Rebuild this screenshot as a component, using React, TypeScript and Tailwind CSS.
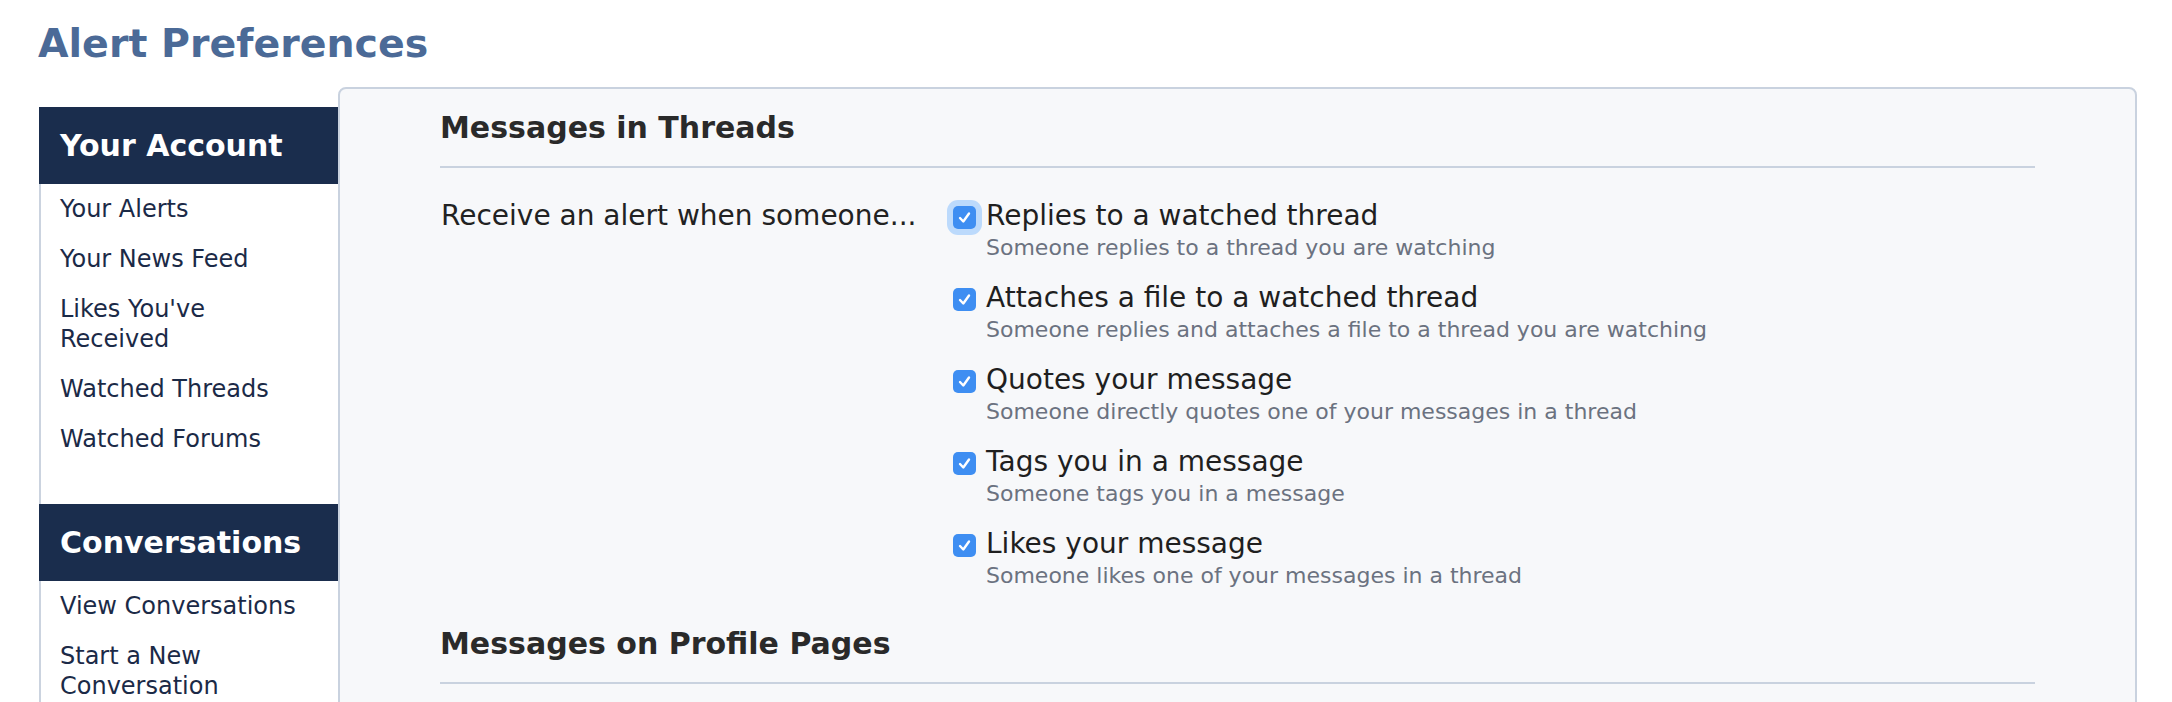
const sidebar = [
  {
    title: 'Your Account',
    links: ['Your Alerts', 'Your News Feed', "Likes You've Received", 'Watched Threads', 'Watched Forums'],
  },
  {
    title: 'Conversations',
    links: ['View Conversations', 'Start a New Conversation'],
  },
]

const threadAlerts = [
  { label: 'Replies to a watched thread', hint: 'Someone replies to a thread you are watching', focused: true },
  { label: 'Attaches a file to a watched thread', hint: 'Someone replies and attaches a file to a thread you are watching' },
  { label: 'Quotes your message', hint: 'Someone directly quotes one of your messages in a thread' },
  { label: 'Tags you in a message', hint: 'Someone tags you in a message' },
  { label: 'Likes your message', hint: 'Someone likes one of your messages in a thread' },
]

const CheckBox = ({ focused }: { focused?: boolean }) => (
  <span
    className={`mt-[7px] flex h-[23px] w-[23px] shrink-0 items-center justify-center rounded-[5px] bg-[#3e8ef2] ${
      focused ? 'shadow-[0_0_0_6px_#bcdafc]' : ''
    }`}
  >
    <svg width="15" height="15" viewBox="0 0 15 15" fill="none">
      <path d="M3 8 L6.3 11.5 L12 3.5" stroke="white" strokeWidth="2.4" strokeLinecap="round" strokeLinejoin="round" />
    </svg>
  </span>
)

export default function App() {
  return (
    <div className="min-h-screen bg-white font-['DejaVu_Sans',sans-serif]">
      {/* ページタイトル */}
      <h1 className="pl-[38px] pt-[19px] text-[39.5px] font-bold leading-[48px] text-[#4b6a97]">Alert Preferences</h1>

      <div className="mt-[20px] flex items-start pl-[39px] pr-[35px]">
        {/* サイドバー */}
        <nav className="mt-[20px] w-[299px] shrink-0 border-l-2 border-[#cbd3df] bg-white">
          {sidebar.map((section, i) => (
            <div key={section.title} className={i > 0 ? 'mt-[40px]' : ''}>
              <h3 className="-ml-[2px] bg-[#1a2d4d] pb-[20px] pl-[21px] pt-[21px] text-[30px] font-bold leading-[36px] text-white">
                {section.title}
              </h3>
              <ul>
                {section.links.map((link) => (
                  <li key={link} className="py-[10px] pl-[19px] pr-[32px] text-[24px] leading-[30px] text-[#1b2a47]">
                    {link}
                  </li>
                ))}
              </ul>
            </div>
          ))}
        </nav>

        {/* 設定パネル */}
        <main className="min-h-[640px] flex-1 rounded-[8px] border-2 border-[#c9d2df] bg-[#f7f8fa] px-[100px] pt-[21px]">
          <h2 className="border-b-2 border-[#c9d2df] pb-[20px] text-[30px] font-bold leading-[36px] text-[#2a2a2a]">
            Messages in Threads
          </h2>

          <div className="flex pt-[31px]">
            <div className="w-[513px] shrink-0 pl-[1px] text-[28px] leading-[34px] text-[#222]">
              Receive an alert when someone...
            </div>
            <ul className="flex flex-col gap-[19px]">
              {threadAlerts.map((item) => (
                <li key={item.label} className="flex gap-[10px]">
                  <CheckBox focused={item.focused} />
                  <div>
                    <div className="text-[28px] leading-[34px] text-[#1f1f1f]">{item.label}</div>
                    <div className="mt-[1px] text-[22px] leading-[28px] text-[#6b7280]">{item.hint}</div>
                  </div>
                </li>
              ))}
            </ul>
          </div>

          <h2 className="mt-[36px] border-b-2 border-[#c9d2df] pb-[20px] text-[30px] font-bold leading-[36px] text-[#2a2a2a]">
            Messages on Profile Pages
          </h2>
        </main>
      </div>
    </div>
  )
}
